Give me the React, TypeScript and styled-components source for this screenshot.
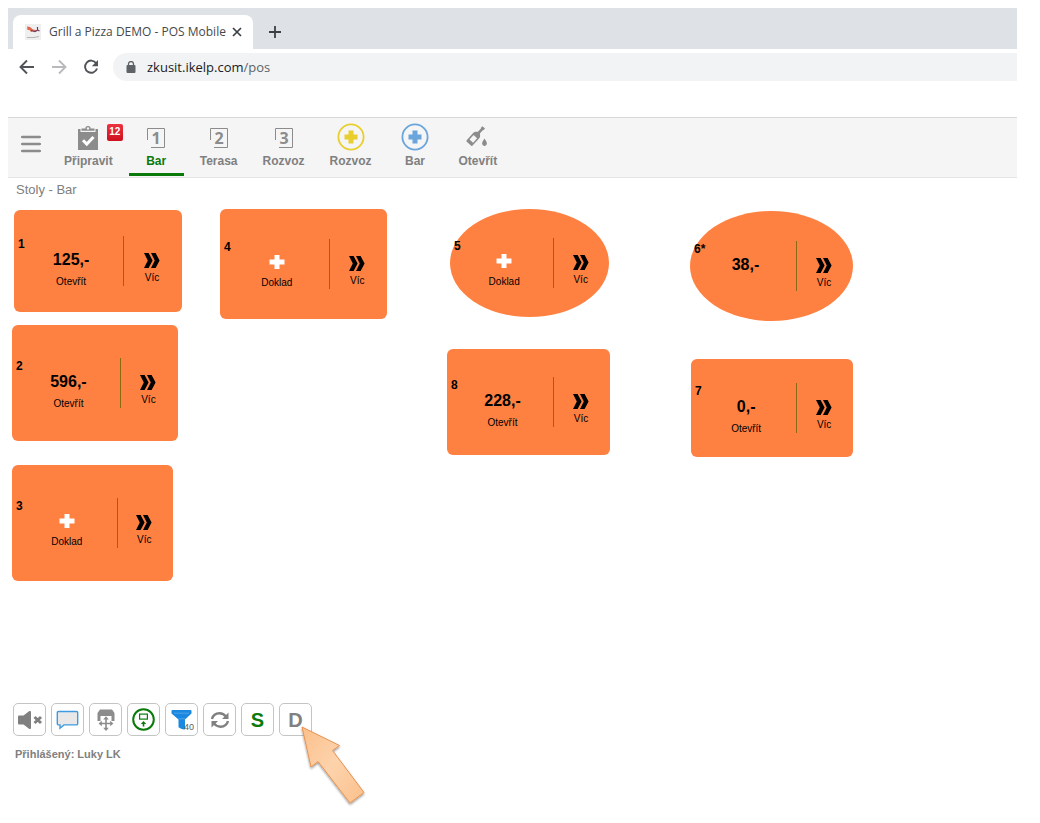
import React from "react";
import styled, { createGlobalStyle, css } from "styled-components";

const GlobalStyle = createGlobalStyle`
  *, *::before, *::after { box-sizing: border-box; }
  body {
    margin: 0;
    background: #fff;
    color: #808080;
    font-family: "Liberation Sans", Arial, sans-serif;
  }
  button {
    margin: 0;
    padding: 0;
    border: 0;
    background: none;
    color: inherit;
    font: inherit;
    cursor: pointer;
  }
  svg { display: block; flex: none; }
`;

const Page = styled.div`
  display: flex;
  flex-direction: column;
  min-height: 100vh;
  padding: 8px 23px 0 8px;
`;

const TabStrip = styled.div`
  display: flex;
  align-items: flex-end;
  height: 41px;
  padding-left: 5px;
  background: #dee1e6;
`;

const BrowserTab = styled.div`
  display: flex;
  align-items: center;
  width: 240px;
  height: 34px;
  padding: 0 10px 0 12px;
  gap: 8px;
  border-radius: 8px 8px 0 0;
  background: #fff;
  color: #45484c;
  font: 12px/16px "Open Sans", "Segoe UI", sans-serif;
`;

const TabTitle = styled.span`
  flex: 1;
  min-width: 0;
  white-space: nowrap;
`;

const IconButton = styled.button`
  display: grid;
  flex: none;
  place-items: center;
  width: 12px;
  height: 34px;
`;

const NewTabButton = styled(IconButton)`
  width: 44px;
`;

const AddressRow = styled.div`
  display: flex;
  align-items: center;
  height: 36px;
  padding-left: 11px;
  gap: 16px;
`;

const NavButton = styled(IconButton)`
  width: 16px;
`;

const AddressBar = styled.div`
  display: flex;
  flex: 1;
  align-items: center;
  height: 28px;
  margin-left: -2px;
  padding-left: 13px;
  gap: 11px;
  border-radius: 14px 0 0 14px;
  background: #f1f3f4;
  color: #5f6368;
  font: 13px/20px "Open Sans", "Segoe UI", sans-serif;
`;

const Host = styled.span`
  color: #202124;
`;

const Toolbar = styled.nav`
  display: flex;
  align-items: stretch;
  height: 61px;
  margin-top: 32px;
  padding: 0 0 1px 12px;
  gap: 7px;
  border-top: 1px solid #d8d8d8;
  border-bottom: 1px solid #e4e4e4;
  background: #f5f5f5;
`;

const MenuButton = styled.button`
  display: grid;
  place-items: center;
  width: 28px;
  padding: 0 7px 6px 0;
`;

const ToolItem = styled.button<{ $active?: boolean }>`
  position: relative;
  display: flex;
  flex-direction: column;
  align-items: center;
  min-width: 55px;
  padding: 5px 9px 0;
  gap: 2px;
  border-bottom: 3px solid ${(p) => (p.$active ? "#0a7a0a" : "transparent")};
  color: ${(p) => (p.$active ? "#0a7a0a" : "#808080")};
  font-size: 12px;
  font-weight: bold;
  line-height: 16px;
`;

const ToolIcon = styled.span`
  display: grid;
  place-items: center;
  height: 28px;
`;

const Badge = styled.span`
  position: absolute;
  top: 6px;
  right: -1px;
  width: 16px;
  height: 17px;
  border-radius: 2px;
  background: linear-gradient(#ee3340, #cc101e);
  color: #fff;
  font-size: 10px;
  line-height: 16px;
  text-align: center;
`;

const Heading = styled.h1`
  margin: 0;
  padding: 3px 8px 0;
  font-size: 13px;
  font-weight: normal;
  line-height: 18px;
`;

const FloorPlan = styled.main`
  position: relative;
  height: 504px;
`;

type TableShape = { $x: number; $y: number; $w: number; $h: number; $round?: boolean };

const TableCard = styled.section<TableShape>`
  position: absolute;
  left: ${(p) => p.$x}px;
  top: ${(p) => p.$y}px;
  display: grid;
  grid-template-columns: 65% 35%;
  align-items: center;
  width: ${(p) => p.$w}px;
  height: ${(p) => p.$h}px;
  border-radius: ${(p) => (p.$round ? "50%" : "6px")};
  background: #ff8142;
  color: #000;
`;

const TableNumber = styled.span`
  position: absolute;
  left: 4px;
  top: 50%;
  margin-top: -25px;
  font-size: 12px;
  font-weight: bold;
  line-height: 16px;
`;

const cell = css`
  display: flex;
  flex-direction: column;
  align-items: center;
  height: 50px;
  font-size: 10px;
  line-height: 12px;
`;

const OpenButton = styled.button`
  ${cell}
  padding: 14px 0 0 5px;
  gap: 6px;
`;

const MoreButton = styled.button`
  ${cell}
  padding: 17px 2px 0 0;
  gap: 4px;
  border-left: 1px solid #8a6a14;
`;

const Amount = styled.strong`
  font-size: 16px;
  line-height: 20px;
`;

const PlusBox = styled.span`
  height: 20px;
  padding-top: 1px;
`;

const ActionBar = styled.footer`
  position: relative;
  display: flex;
  align-items: center;
  padding-left: 5px;
  gap: 5px;
`;

const ActionButton = styled.button<{ $color?: string }>`
  position: relative;
  display: grid;
  place-items: center;
  width: 33px;
  height: 33px;
  border: 1px solid #c4c4c4;
  border-radius: 5px;
  background: #fff;
  color: ${(p) => p.$color ?? "#808080"};
  font-size: 20px;
  font-weight: bold;
  line-height: 24px;
`;

const FilterCount = styled.span`
  position: absolute;
  right: 3px;
  bottom: 3px;
  color: #606060;
  font-size: 9px;
  font-weight: normal;
  line-height: 10px;
`;

const Pointer = styled.svg`
  position: absolute;
  left: 286px;
  top: 18px;
  pointer-events: none;
`;

const SignedIn = styled.p`
  margin: 0;
  padding: 10px 7px;
  font-size: 11px;
  font-weight: bold;
  line-height: 16px;
`;

const Favicon = () => (
  <svg width="16" height="16" viewBox="0 0 16 16">
    <rect width="16" height="16" fill="#efeff0" />
    <path d="M2 2.500l3 .5 3 2.500 4 .8-1 1.200-3-.5-2 1-1.500-2L2.500 6z" fill="#e0694c" />
    <path d="M6 6.500l4 1.200 2.500-1.500V3M12.500 6l2 1" fill="none" stroke="#6e3a5e" strokeWidth="1.200" />
    <path d="M2 13.500h7l5-1" fill="none" stroke="#b5b5b5" />
  </svg>
);

const CloseIcon = () => (
  <svg width="10" height="10" viewBox="0 0 10 10">
    <path d="M1 1l8 8M9 1l-8 8" stroke="#3c4043" strokeWidth="1.7" />
  </svg>
);

const NewTabIcon = () => (
  <svg width="12" height="12" viewBox="0 0 12 12">
    <path d="M6 0v12M0 6h12" stroke="#3c4043" strokeWidth="1.8" />
  </svg>
);

const ArrowIcon = ({ forward = false }: { forward?: boolean }) => (
  <svg width="16" height="16" viewBox="0 0 16 16">
    <path
      d={forward ? "M1 8h13M8 1.5L14.5 8 8 14.5" : "M15 8H2M8 1.5L1.5 8 8 14.5"}
      fill="none"
      stroke={forward ? "#b8babd" : "#505357"}
      strokeWidth="1.9"
    />
  </svg>
);

const ReloadIcon = () => (
  <svg width="16" height="16" viewBox="0 0 16 16">
    <path d="M13.2 4.2A6.1 6.1 0 1 0 14 9.5" fill="none" stroke="#505357" strokeWidth="1.9" />
    <path d="M15 1v6.2H8.8z" fill="#505357" />
  </svg>
);

const LockIcon = () => (
  <svg width="10" height="12" viewBox="0 0 10 12">
    <rect x="0.5" y="4" width="9" height="8" rx="1" fill="#5f6368" />
    <path d="M2.5 5V3a2.5 2.5 0 0 1 5 0v2" fill="none" stroke="#5f6368" strokeWidth="1.3" />
  </svg>
);

const MenuIcon = () => (
  <svg width="20" height="18" viewBox="0 0 20 18">
    <path d="M1.2 2h17.6M1.2 9h17.6M1.2 16h17.6" stroke="#8c8c8c" strokeWidth="2.6" strokeLinecap="round" />
  </svg>
);

const ClipboardIcon = () => (
  <svg width="22" height="26" viewBox="0 -2 22 26">
    <path d="M1 3h2.500v3h15V3H21v21H1z" fill="#8c8c8c" />
    <path d="M4.500 4.800V2.600h3.800a2.700 2.700 0 0 1 5.400 0h3.800v2.200z" fill="#8c8c8c" />
    <circle cx="11" cy="2.400" r="1.200" fill="#f5f5f5" />
    <path d="M6 14.200l3.800 3.800L16.500 11" fill="none" stroke="#fff" strokeWidth="3" />
  </svg>
);

const RoomIcon = ({ digit }: { digit: string }) => (
  <svg width="20" height="24" viewBox="0 -2 20 24">
    <path d="M1.500 13V1.500h17v19H5" fill="none" stroke="#8c8c8c" />
    <text x="10" y="17" textAnchor="middle" fontFamily="Open Sans, sans-serif" fontWeight="700" fontSize="16" fill="#8c8c8c">
      {digit}
    </text>
  </svg>
);

const AddIcon = ({ color }: { color: string }) => (
  <svg width="28" height="28" viewBox="0 0 28 28">
    <circle cx="14" cy="14" r="12.6" fill="none" stroke={color} strokeWidth="1.8" />
    <path d="M14 7.500v13M7.500 14h13" stroke={color} strokeWidth="5" />
  </svg>
);

const BottleIcon = () => (
  <svg width="26" height="24" viewBox="0 0 26 24">
    <g transform="rotate(42 10 12)">
      <path d="M8.200-1h3.600v2.400h-.5v4.100c0 1.500 2.700 2 2.700 4.200V20q0 1-1 1H7q-1 0-1-1V9.700c0-2.200 2.700-2.700 2.700-4.200V1.400h-.5z" fill="#8c8c8c" />
      <path d="M7.600 11.500h4.800v6H7.600z" fill="#f5f5f5" />
    </g>
    <path d="M19.500 13.500c1 2 2.400 3.200 2.400 5a2.400 2.400 0 0 1-4.800 0c0-1.800 1.400-3 2.400-5z" fill="#8c8c8c" />
  </svg>
);

const WhitePlus = () => (
  <svg width="16" height="16" viewBox="0 0 16 16">
    <path d="M5.500 1h5v4.500H15.500v5h-5V15h-5v-4.500H.5v-5h5z" fill="#fff" />
  </svg>
);

const ChevronsIcon = () => (
  <svg width="16" height="15" viewBox="0 0 16 15">
    <path d="M0 0h4.600L8.600 7.500 4.600 15H0l3.800-7.500zM7 0h4.600l4 7.500-4 7.500H7l3.800-7.500z" fill="#000" />
  </svg>
);

const MuteIcon = () => (
  <svg width="26" height="20" viewBox="0 0 26 20">
    <path d="M1 6.500a1 1 0 0 1 1-1h4.500L12 1.300c1-.8 2-.3 2 .9v15.600c0 1.200-1 1.700-2 .9l-5.500-4.200H2a1 1 0 0 1-1-1z" fill="#808080" />
    <path d="M17.500 7l6.500 6M24 7l-6.500 6" stroke="#808080" strokeWidth="3" />
  </svg>
);

const ChatIcon = () => (
  <svg width="23" height="20" viewBox="0 0 23 20">
    <path d="M2.500 1.500h18a1.200 1.200 0 0 1 1.200 1.200v11a1.200 1.200 0 0 1-1.200 1.200H8l-4 3.300v-3.300H2.500a1.200 1.200 0 0 1-1.200-1.200v-11a1.200 1.200 0 0 1 1.200-1.200z" fill="#e8e8e8" stroke="#3f9be0" strokeWidth="1.400" />
  </svg>
);

const MoveTableIcon = () => (
  <svg width="20" height="24" viewBox="0 0 20 24">
    <path d="M4 1.500h12l2.500 3.500v8h-3V8h-11v5h-3V5z" fill="#8c8c8c" />
    <path d="M10 10v11M4.500 15.500h11" stroke="#fff" strokeWidth="4" />
    <path d="M10 10.500v10.500M4.500 15.500h11" stroke="#8c8c8c" strokeWidth="1.600" />
    <path d="M10 8.300l2.800 3.200H7.200zM10 23l2.800-3.200H7.200zM2.600 15.500l3.200-2.800v5.600zM17.400 15.500l-3.200-2.800v5.600z" fill="#8c8c8c" />
  </svg>
);

const TransferIcon = () => (
  <svg width="23" height="23" viewBox="0 0 23 23">
    <circle cx="11.500" cy="11.500" r="10.300" fill="none" stroke="#0a7a0a" strokeWidth="2" />
    <rect x="7.600" y="6.100" width="7.800" height="5" fill="none" stroke="#0a7a0a" strokeWidth="1.200" />
    <path d="M11.500 13l2.700 3h-1.900v2.500h-1.600V16H8.800z" fill="#0a7a0a" />
  </svg>
);

const FunnelIcon = () => (
  <svg width="21" height="21" viewBox="0 0 21 21">
    <path d="M1.500 1h18q1 0 1 1v2.500L14 10.500V20.300q-3.500.5-6.500-2v-7.800L.5 4.500V2q0-1 1-1z" fill="#1c87e0" />
    <path d="M3 4.200h15M7.500 9.800H14" stroke="#5bacec" strokeWidth=".8" />
  </svg>
);

const RefreshIcon = () => (
  <svg width="20" height="18" viewBox="0 0 20 18">
    <path d="M2 8C3 4.200 6 2.300 9.500 2.300c3 0 5 1.300 6.500 3.300M18 10c-1 3.800-4 5.700-7.500 5.700-3 0-5-1.300-6.500-3.300" fill="none" stroke="#808080" strokeWidth="2.400" />
    <path d="M18.500 1.500V8H12zM1.500 16.500V10H8z" fill="#808080" />
  </svg>
);

const tools: { label: string; icon: React.ReactNode; badge?: number; active?: boolean }[] = [
  { label: "Připravit", icon: <ClipboardIcon />, badge: 12 },
  { label: "Bar", icon: <RoomIcon digit="1" />, active: true },
  { label: "Terasa", icon: <RoomIcon digit="2" /> },
  { label: "Rozvoz", icon: <RoomIcon digit="3" /> },
  { label: "Rozvoz", icon: <AddIcon color="#e8cf2e" /> },
  { label: "Bar", icon: <AddIcon color="#6aa5dc" /> },
  { label: "Otevřít", icon: <BottleIcon /> },
];

type TableData = { name: string; x: number; y: number; w: number; h: number; amount?: string; label?: string; round?: boolean };

const tables: TableData[] = [
  { name: "1", x: 6, y: 11, w: 168, h: 102, amount: "125,-", label: "Otevřít" },
  { name: "2", x: 4, y: 126, w: 166, h: 116, amount: "596,-", label: "Otevřít" },
  { name: "3", x: 4, y: 266, w: 161, h: 116, label: "Doklad" },
  { name: "4", x: 212, y: 10, w: 167, h: 110, label: "Doklad" },
  { name: "5", x: 442, y: 10, w: 159, h: 108, label: "Doklad", round: true },
  { name: "6*", x: 682, y: 12, w: 163, h: 110, amount: "38,-", round: true },
  { name: "7", x: 683, y: 160, w: 162, h: 98, amount: "0,-", label: "Otevřít" },
  { name: "8", x: 439, y: 150, w: 163, h: 106, amount: "228,-", label: "Otevřít" },
];

export default function App() {
  return (
    <>
      <GlobalStyle />
      <Page>
        <TabStrip>
          <BrowserTab>
            <Favicon />
            <TabTitle>Grill a Pizza DEMO - POS Mobile</TabTitle>
            <IconButton aria-label="Zavřít kartu"><CloseIcon /></IconButton>
          </BrowserTab>
          <NewTabButton aria-label="Nová karta"><NewTabIcon /></NewTabButton>
        </TabStrip>
        <AddressRow>
          <NavButton aria-label="Zpět"><ArrowIcon /></NavButton>
          <NavButton aria-label="Vpřed"><ArrowIcon forward /></NavButton>
          <NavButton aria-label="Obnovit"><ReloadIcon /></NavButton>
          <AddressBar>
            <LockIcon />
            <span><Host>zkusit.ikelp.com</Host>/pos</span>
          </AddressBar>
        </AddressRow>

        <Toolbar>
          <MenuButton aria-label="Menu"><MenuIcon /></MenuButton>
          {tools.map((t, i) => (
            <ToolItem key={i} $active={t.active}>
              <ToolIcon>{t.icon}</ToolIcon>
              {t.label}
              {t.badge && <Badge>{t.badge}</Badge>}
            </ToolItem>
          ))}
        </Toolbar>

        <Heading>Stoly - Bar</Heading>

        <FloorPlan>
          {tables.map((t) => (
            <TableCard key={t.name} $x={t.x} $y={t.y} $w={t.w} $h={t.h} $round={t.round}>
              <TableNumber>{t.name}</TableNumber>
              <OpenButton>
                {t.amount ? <Amount>{t.amount}</Amount> : <PlusBox><WhitePlus /></PlusBox>}
                {t.label}
              </OpenButton>
              <MoreButton>
                <ChevronsIcon />
                Víc
              </MoreButton>
            </TableCard>
          ))}
        </FloorPlan>

        <ActionBar>
          <ActionButton aria-label="Ztlumit"><MuteIcon /></ActionButton>
          <ActionButton aria-label="Zprávy"><ChatIcon /></ActionButton>
          <ActionButton aria-label="Přesunout stoly"><MoveTableIcon /></ActionButton>
          <ActionButton aria-label="Přenést"><TransferIcon /></ActionButton>
          <ActionButton aria-label="Filtr">
            <FunnelIcon />
            <FilterCount>40</FilterCount>
          </ActionButton>
          <ActionButton aria-label="Aktualizovat"><RefreshIcon /></ActionButton>
          <ActionButton $color="#0a7a0a">S</ActionButton>
          <ActionButton>D</ActionButton>
          <Pointer width="80" height="92" viewBox="0 0 80 92" aria-hidden="true">
            <defs>
              <linearGradient id="pointerFill" x1="0" y1="0" x2="1" y2="1">
                <stop offset="0" stopColor="#fbc08c" />
                <stop offset="0.500" stopColor="#fdd3ac" />
                <stop offset="1" stopColor="#fbc08c" />
              </linearGradient>
              <filter id="pointerShadow" x="-20%" y="-20%" width="140%" height="140%">
                <feDropShadow dx="0" dy="1.500" stdDeviation="1.300" floodOpacity="0.400" />
              </filter>
            </defs>
            <path
              d="M8 6L45.500 24.500 38.500 29.500 70 71.500 56 82 24 40.500 17 46z"
              fill="url(#pointerFill)"
              stroke="#e8924f"
              filter="url(#pointerShadow)"
            />
          </Pointer>
        </ActionBar>
        <SignedIn>Přihlášený: Luky LK</SignedIn>
      </Page>
    </>
  );
}
